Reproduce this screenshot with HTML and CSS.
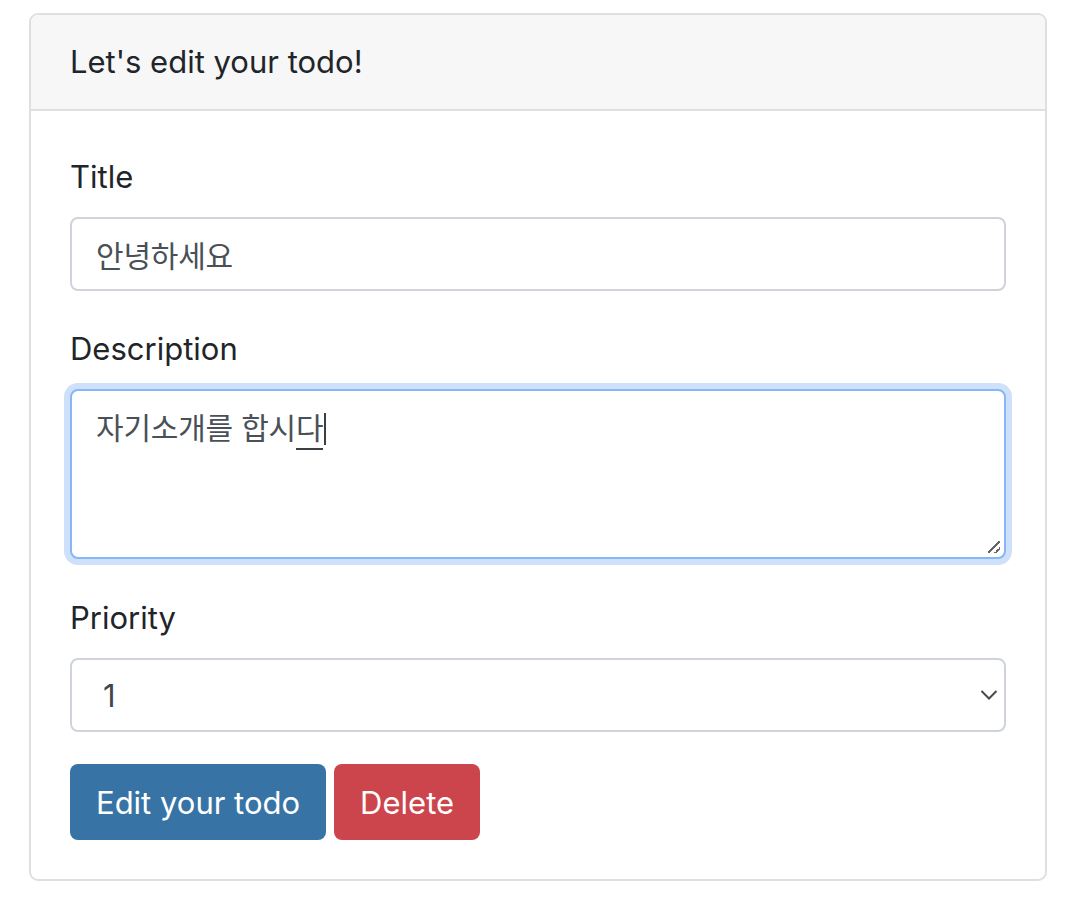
FILE: index.html
```html
<!DOCTYPE html>
<html lang="ko">
<head>
    <meta charset="UTF-8">
    <meta name="viewport" content="width=device-width, initial-scale=1.0">
    <title>Edit todo</title>
    <link rel="stylesheet" href="styles.css">
</head>
<body>
    <div class="card">
        <div class="card-header">Let's edit your todo!</div>

        <div class="card-body">
            <div class="form-group">
                <label class="form-label" for="title">Title</label>
                <input id="title" class="form-control" type="text" value="안녕하세요">
            </div>

            <div class="form-group form-group-wide">
                <label class="form-label" for="description">Description</label>
                <div class="form-control textarea is-focused" id="description">자기소개를 합시<span class="composing">다</span><span class="caret"></span></div>
            </div>

            <div class="form-group form-group-last">
                <label class="form-label" for="priority">Priority</label>
                <div class="select-wrap">
                    <select id="priority" class="form-control form-select">
                        <option selected>1</option>
                        <option>2</option>
                        <option>3</option>
                    </select>
                    <svg class="select-arrow" width="18" height="12" viewBox="0 0 18 12">
                        <path d="M1.5 2 L9 9.5 L16.5 2" fill="none" stroke="#4a4a4a" stroke-width="2"/>
                    </svg>
                </div>
            </div>

            <div class="actions">
                <button class="btn btn-primary">Edit your todo</button>
                <button class="btn btn-danger">Delete</button>
            </div>
        </div>
    </div>
</body>
</html>
```

FILE: styles.css
```css
* {
    margin: 0;
    padding: 0;
    box-sizing: border-box;
}

body {
    font-family: Inter, "Noto Sans CJK KR", sans-serif;
    font-size: 31px;
    color: #212529;
    background: #fff;
    padding: 13px 31px 0 29px;
}

.card {
    width: 1018px;
    border: 2px solid #dfdfdf;
    border-radius: 9px;
    overflow: hidden;
}

.card-header {
    height: 96px;
    display: flex;
    align-items: center;
    padding: 0 39px 2px;
    background: #f7f7f7;
    border-bottom: 2px solid #dfdfdf;
}

.card-body {
    padding: 42px 39px 39px;
}

.form-group {
    margin-bottom: 34px;
}

.form-group-wide {
    margin-bottom: 35px;
}

.form-group-last {
    margin-bottom: 32px;
}

.form-label {
    display: block;
    line-height: 48px;
    margin-bottom: 16px;
}

.form-control {
    display: block;
    width: 100%;
    height: 74px;
    padding: 0 24px;
    border: 2px solid #ced4da;
    border-radius: 8px;
    background: #fff;
    color: #495057;
    font-family: "Noto Sans CJK KR", sans-serif;
    font-size: 30px;
    letter-spacing: -0.2px;
    outline: none;
}

.textarea {
    height: 170px;
    padding: 11px 24px;
    line-height: 48px;
    position: relative;
}

.is-focused {
    border-color: #86b7f7;
    box-shadow: 0 0 0 6px #cfe0fb;
}

.composing {
    border-bottom: 2px solid #3a3f44;
}

.caret {
    display: inline-block;
    width: 2px;
    height: 32px;
    margin-left: 1px;
    vertical-align: -6px;
    background: #3a3f44;
}

.textarea::after {
    content: "";
    position: absolute;
    right: 4px;
    bottom: 4px;
    width: 12px;
    height: 12px;
    background:
        linear-gradient(135deg, transparent 45%, #666 45%, #666 55%, transparent 55%),
        linear-gradient(135deg, transparent 75%, #666 75%, #666 85%, transparent 85%);
}

.select-wrap {
    position: relative;
}

.form-select {
    appearance: none;
    -webkit-appearance: none;
    padding-left: 31px;
    font-family: Inter, sans-serif;
    font-size: 31px;
    letter-spacing: 0;
    color: #40464c;
}

.select-arrow {
    position: absolute;
    right: 8px;
    top: 31px;
}

.actions {
    display: flex;
    gap: 8px;
}

.btn {
    height: 76px;
    padding: 0 26px;
    border: none;
    border-radius: 8px;
    font-family: Inter, sans-serif;
    font-size: 31px;
    color: #fff;
    cursor: pointer;
}

.btn-primary {
    background: #3774a5;
}

.btn-danger {
    background: #cd454c;
}
```
